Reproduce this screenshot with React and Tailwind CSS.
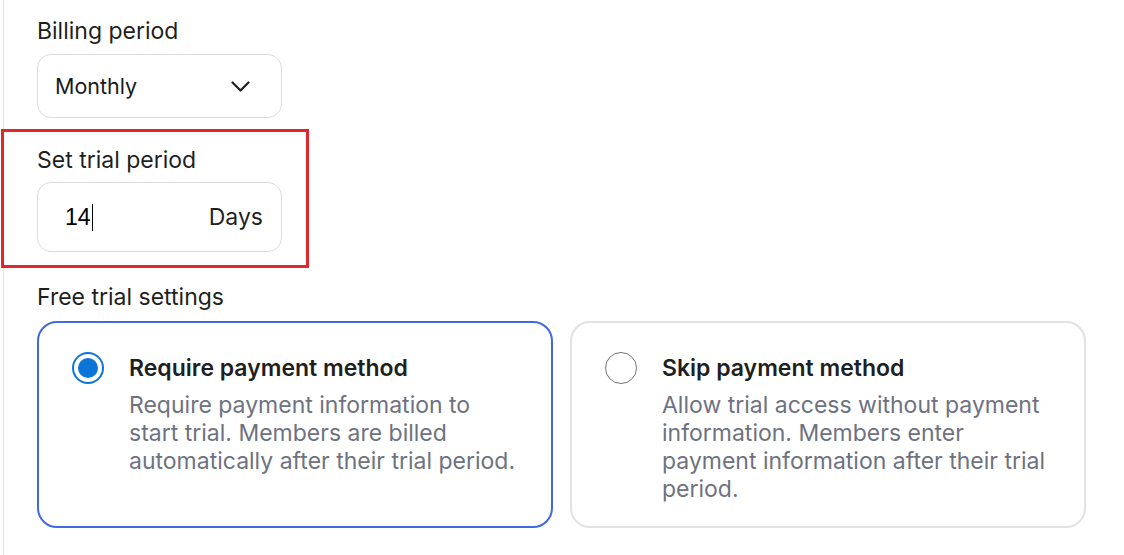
import React from "react";

function Radio({ checked }) {
  return checked ? (
    <span className="flex h-[32px] w-[32px] shrink-0 items-center justify-center rounded-full border-[2px] border-[#0b74d9] bg-white">
      <span className="block h-[20px] w-[20px] rounded-full bg-[#0b74d9]" />
    </span>
  ) : (
    <span className="block h-[32px] w-[32px] shrink-0 rounded-full border-[1.5px] border-[#767676] bg-white" />
  );
}

function Card({ checked, title, desc }) {
  return (
    <div
      className={
        "flex h-[207px] w-[516px] rounded-[20px] bg-white pl-[33px] pt-[29px] " +
        (checked ? "border-[2px] border-[#4169e1]" : "border-[2px] border-[#e2e2e4]")
      }
    >
      <div className="shrink-0">
        <Radio checked={checked} />
      </div>
      <div className="ml-[25px] flex w-[390px] flex-col pt-[1.5px]">
        <div className="text-[23px] font-semibold leading-[28px] text-[#1f1f1f]">{title}</div>
        <div className="mt-[9.5px] text-[23px] leading-[28px] text-[#6e7280]">{desc}</div>
      </div>
    </div>
  );
}

export default function App() {
  return (
    <div
      className="min-h-[555px] w-[1124px] bg-white"
      style={{ fontFamily: "Inter, 'Noto Sans', sans-serif" }}
    >
      <div className="ml-[3px] min-h-[555px] border-l border-[#e3e3e3] pl-[33px] pt-[17px]">
        <div className="text-[23px] leading-[28px] text-[#1f1f1f]">Billing period</div>
        <div className="mt-[9px] flex h-[64px] w-[245px] items-center justify-between rounded-[14px] border border-[#dcdcdc] pl-[17px] pr-[31px]">
          <span className="text-[21.5px] text-[#1a1a1a]">Monthly</span>
          <svg width="19" height="11" viewBox="0 0 19 11" fill="none">
            <path d="M1.5 1.5 L9.5 9.5 L17.5 1.5" stroke="#1f1f1f" strokeWidth="2.2" strokeLinecap="round" strokeLinejoin="round" />
          </svg>
        </div>

        <div className="relative mt-[28px]">
          <div className="text-[23px] leading-[28px] text-[#1f1f1f]">Set trial period</div>
          <div className="mt-[8px] flex h-[70px] w-[245px] items-center justify-between rounded-[14px] border border-[#dcdcdc] pl-[27px] pr-[18px]">
            <span className="flex items-center">
              <span
                className="text-[23px] text-black"
                style={{ fontFamily: "'Liberation Sans', Arial, sans-serif" }}
              >
                14
              </span>
              <span className="ml-[1px] block h-[27px] w-[1.5px] bg-black" />
            </span>
            <span className="text-[23px] text-[#1f1f1f]">Days</span>
          </div>
          <div className="pointer-events-none absolute left-[-36px] top-[-17px] h-[139px] w-[308px] border-[3px] border-[#e3262a]" />
        </div>

        <div className="mt-[31px] text-[23px] leading-[28px] text-[#1f1f1f]">Free trial settings</div>
        <div className="mt-[10px] flex gap-[17px]">
          <Card
            checked
            title="Require payment method"
            desc="Require payment information to start trial. Members are billed automatically after their trial period."
          />
          <Card
            title="Skip payment method"
            desc="Allow trial access without payment information. Members enter payment information after their trial period."
          />
        </div>
      </div>
    </div>
  );
}
